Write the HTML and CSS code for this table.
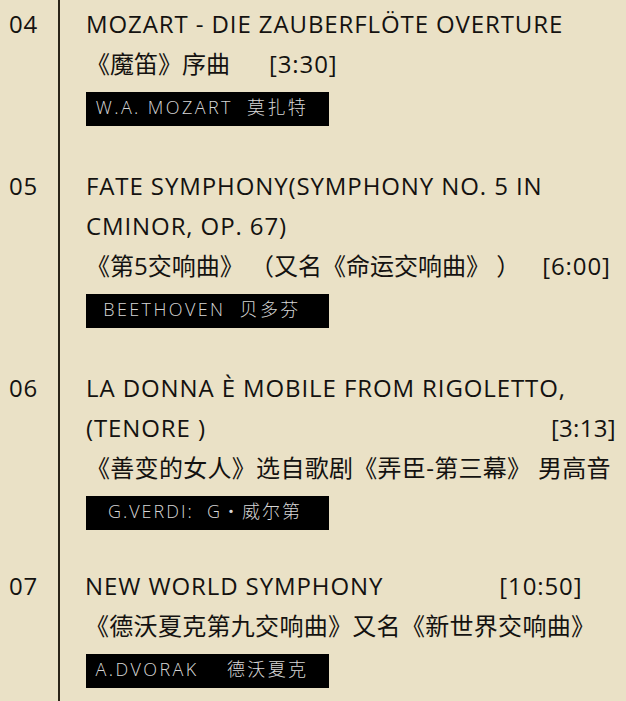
FILE: index.html
```html
<!DOCTYPE html>
<html lang="zh">
<head>
<meta charset="utf-8">
<link rel="stylesheet" href="styles.css">
</head>
<body>
<div class="list">
  <section class="track">
    <div class="num">04</div>
    <div class="info">
      <div class="line en">MOZART - DIE ZAUBERFLÖTE OVERTURE</div>
      <div class="line">《魔笛》序曲<span class="time en t04">[3:30]</span></div>
      <div class="label">W.A. MOZART&nbsp;&nbsp;莫扎特</div>
    </div>
  </section>
  <section class="track">
    <div class="num">05</div>
    <div class="info">
      <div class="line en">FATE SYMPHONY(SYMPHONY NO. 5 IN CMINOR, OP. 67)</div>
      <div class="line">《第5交响曲》 （又名《命运交响曲》 ）<span class="time en t05">[6:00]</span></div>
      <div class="label">BEETHOVEN&nbsp;&nbsp;贝多芬</div>
    </div>
  </section>
  <section class="track tight">
    <div class="num">06</div>
    <div class="info">
      <div class="line en">LA DONNA È MOBILE FROM RIGOLETTO,</div>
      <div class="line en">(TENORE )<span class="time t06">[3:13]</span></div>
      <div class="line cn">《善变的女人》选自歌剧《弄臣-第三幕》 男高音</div>
      <div class="label narrow">G.VERDI:&nbsp;&nbsp;G・威尔第</div>
    </div>
  </section>
  <section class="track">
    <div class="num">07</div>
    <div class="info">
      <div class="line en shift">NEW WORLD SYMPHONY<span class="time t07">[10:50]</span></div>
      <div class="line cn shift">《德沃夏克第九交响曲》又名《新世界交响曲》</div>
      <div class="label">A.DVORAK&nbsp;&nbsp;&nbsp;&nbsp;德沃夏克</div>
    </div>
  </section>
</div>
</body>
</html>
```
FILE: styles.css
```css
html, body {
  margin: 0;
  padding: 0;
}
body {
  background: #eae1c6;
  color: #141210;
  font-family: "Open Sans", "Noto Sans CJK SC", sans-serif;
  font-size: 24px;
  width: 626px;
  height: 701px;
  overflow: hidden;
}
.list {
  display: flex;
  flex-direction: column;
}
.track {
  display: grid;
  grid-template-columns: 60px 1fr;
}
.num {
  border-right: 2px solid #2a2418;
  padding: 4px 0 0 9px;
  line-height: 40px;
  letter-spacing: 0.8px;
}
.info {
  padding: 4px 0 36px 26px;
}
.tight .info {
  padding-bottom: 32px;
}
.line {
  line-height: 40px;
}
.en {
  letter-spacing: 0.9px;
}
.cn {
  letter-spacing: 0.3px;
}
.shift {
  margin-left: -1px;
}
.time {
  display: inline-block;
}
.t04 { margin-left: 39px; }
.t05 { margin-left: 22px; }
.t06 { margin-left: 345px; letter-spacing: 0.3px; }
.t07 { margin-left: 116px; }
.label {
  margin-top: 8px;
  width: 243px;
  height: 34px;
  box-sizing: border-box;
  padding: 0 11px 3px 0;
  background: #000;
  color: #d6d6d6;
  font-family: "Open Sans", "Noto Sans CJK SC", sans-serif;
  font-weight: 300;
  font-size: 18px;
  letter-spacing: 2.4px;
  line-height: 31px;
  text-align: center;
  white-space: nowrap;
}
.narrow {
  letter-spacing: 2px;
  padding-left: 6px;
}
```
